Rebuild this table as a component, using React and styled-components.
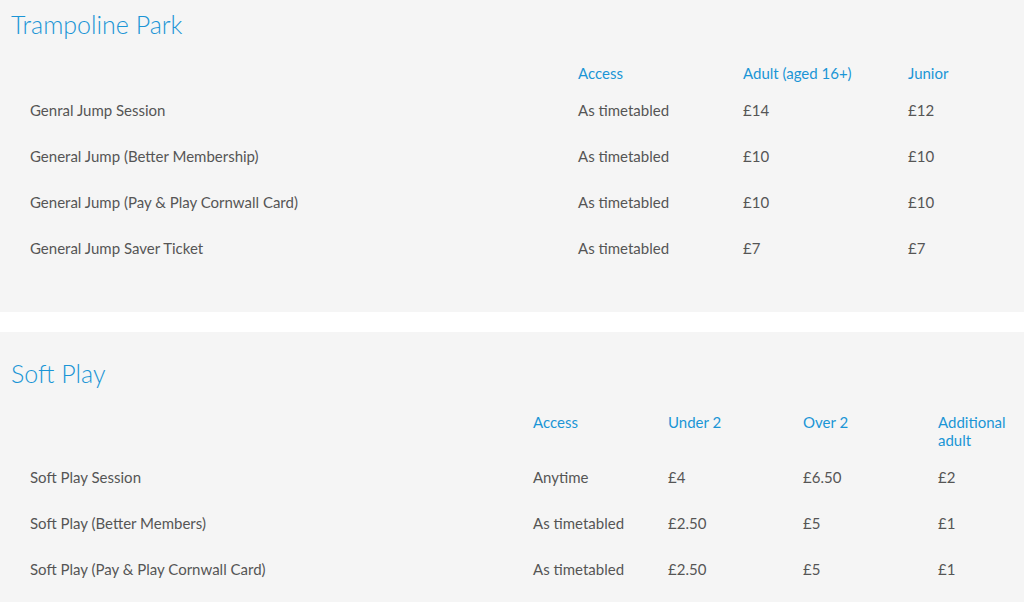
import React from "react";
import styled, { createGlobalStyle } from "styled-components";

const Global = createGlobalStyle`
  html, body { margin: 0; padding: 0; background: #ffffff; }
  body { font-family: Lato, "Open Sans", sans-serif; -webkit-font-smoothing: antialiased; }
`;

const Page = styled.div`
  display: flex;
  flex-direction: column;
  gap: 20px;
  height: 602px;
  overflow: hidden;
`;

const Panel = styled.section`
  background: #f5f5f5;
  padding: ${(p) => p.$top}px 0 ${(p) => p.$bottom}px 11px;
`;

const Title = styled.h2`
  margin: 0;
  font-family: Lato, sans-serif;
  font-weight: 300;
  font-size: 25px;
  line-height: 34px;
  color: #1b95d6;
`;

const Table = styled.div`
  display: grid;
  grid-template-columns: ${(p) => p.$cols};
  margin-top: ${(p) => p.$gap}px;
`;

const Head = styled.div`
  padding: 0 19px 5px 19px;
  font-size: 15px;
  line-height: 18px;
  color: #1b95d6;
`;

const Cell = styled.div`
  padding: 14px 19px;
  font-size: 15px;
  line-height: 18px;
  color: #555555;
`;

const sections = [
  {
    title: "Trampoline Park",
    cols: "548px 165px 165px 1fr",
    top: 7,
    bottom: 41,
    heads: ["", "Access", "Adult (aged 16+)", "Junior"],
    rows: [
      ["Genral Jump Session", "As timetabled", "£14", "£12"],
      ["General Jump (Better Membership)", "As timetabled", "£10", "£10"],
      ["General Jump (Pay & Play Cornwall Card)", "As timetabled", "£10", "£10"],
      ["General Jump Saver Ticket", "As timetabled", "£7", "£7"],
    ],
  },
  {
    title: "Soft Play",
    cols: "503px 135px 135px 135px 105px",
    top: 24,
    bottom: 20,
    heads: ["", "Access", "Under 2", "Over 2", "Additional adult"],
    rows: [
      ["Soft Play Session", "Anytime", "£4", "£6.50", "£2"],
      ["Soft Play (Better Members)", "As timetabled", "£2.50", "£5", "£1"],
      ["Soft Play (Pay & Play Cornwall Card)", "As timetabled", "£2.50", "£5", "£1"],
    ],
  },
];

export default function App() {
  return (
    <>
      <Global />
      <Page>
        {sections.map((s) => (
          <Panel key={s.title} $top={s.top} $bottom={s.bottom}>
            <Title>{s.title}</Title>
            <Table $cols={s.cols} $gap={23}>
              {s.heads.map((h, i) => (
                <Head key={"h" + i}>{h}</Head>
              ))}
              {s.rows.map((r, ri) =>
                r.map((c, ci) => <Cell key={ri + "-" + ci}>{c}</Cell>)
              )}
            </Table>
          </Panel>
        ))}
      </Page>
    </>
  );
}
